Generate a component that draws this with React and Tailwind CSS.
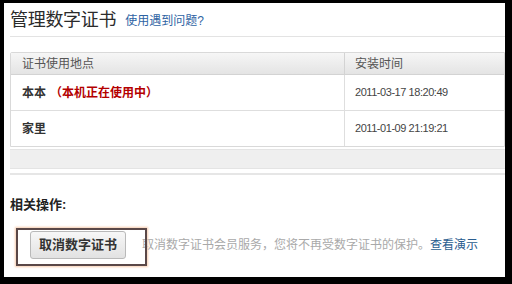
import React from "react";

const cjk = { fontFamily: '"Liberation Sans", "Noto Sans CJK SC", sans-serif' };

export default function App() {
  return (
    <div className="w-[512px] h-[284px] bg-black pt-[3px] pl-[4px] pr-[7px] pb-[7px] overflow-hidden" style={cjk}>
      <div className="relative w-full h-full bg-white overflow-hidden">
        <div className="pl-[6px]">
          {/* title */}
          <div className="h-[34px] flex items-center border-b border-[#e3e3e3]">
            <span className="text-[18px] leading-[20px] text-[#2b2b2b] tracking-[-0.3px]">管理数字证书</span>
            <span className="ml-[9px] mt-[3px] text-[12px] leading-[14px] text-[#2e63a3]">使用遇到问题?</span>
          </div>

          {/* table */}
          <div className="mt-[15px] border border-[#d9d9d9] rounded-tl-[2px]">
            <div className="flex h-[22px] bg-gradient-to-b from-[#f6f6f6] to-[#e4e4e4] border-b border-[#d3d3d3] text-[12px] text-[#555]">
              <div className="w-[334px] pl-[11px] flex items-center border-r border-[#d3d3d3]">证书使用地点</div>
              <div className="flex-1 pl-[10px] flex items-center">安装时间</div>
            </div>
            <div className="flex h-[36px] border-b border-[#dedede]">
              <div className="w-[334px] pl-[11px] flex items-center border-r border-[#dedede] text-[12px] font-bold text-[#333]">
                <span>本本</span>
                <span className="ml-[4px] text-[#b40000]">（本机正在使用中）</span>
              </div>
              <div className="flex-1 pl-[10px] flex items-center text-[11px] text-[#444] tracking-[-0.45px]">2011-03-17 18:20:49</div>
            </div>
            <div className="flex h-[35px]">
              <div className="w-[334px] pl-[11px] flex items-center border-r border-[#dedede] text-[12px] font-bold text-[#333]">家里</div>
              <div className="flex-1 pl-[10px] flex items-center text-[11px] text-[#444] tracking-[-0.45px]">2011-01-09 21:19:21</div>
            </div>
          </div>

          {/* pager bar */}
          <div className="mt-[2px] h-[20px] bg-[#efefef] border-y border-[#e4e4e4]"></div>
          <div className="mt-[4px] h-[2px] bg-[#e6e6e6]"></div>

          {/* operations */}
          <div className="mt-[22px] text-[13px] leading-[16px] font-bold text-[#222]">相关操作:</div>
          <div className="mt-[18px] flex items-center">
            <button className="ml-[20px] w-[96px] h-[28px] rounded-[3px] border border-[#b9b9b9] bg-gradient-to-b from-[#f7f7f7] to-[#e2e2e2] text-[13px] font-bold text-[#333]" style={cjk}>
              取消数字证书
            </button>
            <span className="ml-[16px] text-[12px] text-[#a9a9a9] whitespace-nowrap">
              取消数字证书会员服务，您将不再受数字证书的保护。
              <span className="text-[#2a5d8f]">查看演示</span>
            </span>
          </div>
        </div>

        {/* annotation box */}
        <div className="absolute left-[12px] top-[225px] w-[131px] h-[38px] border-2 border-[#5a4848] shadow-[0_0_2px_1px_#f7cdb0]"></div>
      </div>
    </div>
  );
}
